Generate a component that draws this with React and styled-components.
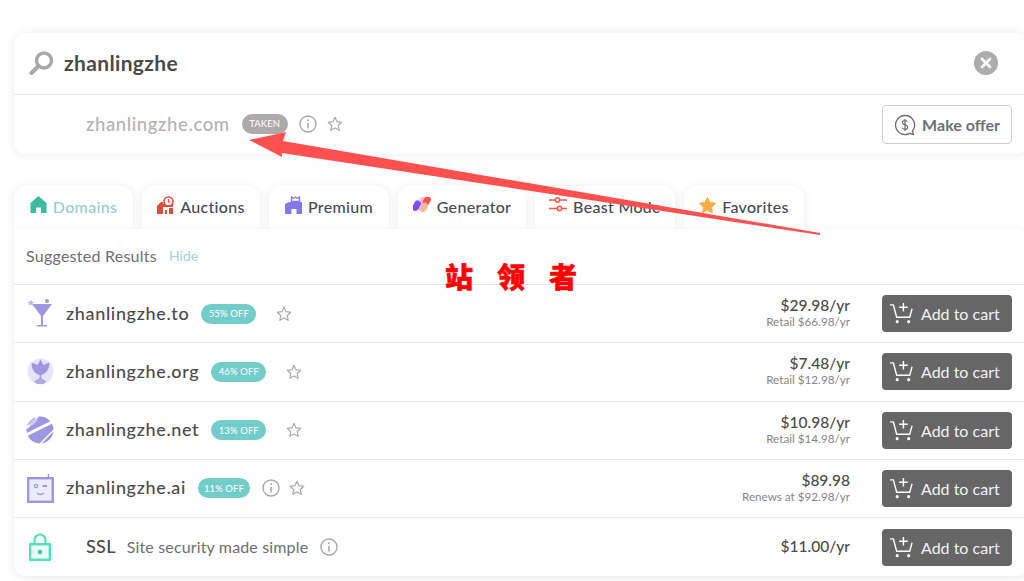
import styled, { createGlobalStyle } from "styled-components";

const GlobalStyle = createGlobalStyle`
  html, body {
    margin: 0;
    padding: 0;
    background: #fff;
    overflow: hidden;
  }
  body {
    font-family: "Lato", "Noto Sans CJK SC", sans-serif;
    color: #4a4a4a;
  }
`;

const InfoIcon = () => (
  <svg width="18" height="18" viewBox="0 0 18 18" fill="none">
    <circle cx="9" cy="9" r="8" stroke="#a9a9a9" strokeWidth="1.4" />
    <circle cx="9" cy="5.2" r="1" fill="#a9a9a9" />
    <path d="M9 8v5.6" stroke="#a9a9a9" strokeWidth="1.6" />
  </svg>
);

const StarIcon = () => (
  <svg width="16" height="16" viewBox="0 0 16 16" fill="none">
    <path
      d="M8 1.3l2 4.4 4.8.6-3.5 3.2.9 4.8L8 11.9l-4.2 2.4.9-4.8L1.2 6.3 6 5.7z"
      stroke="#a9a9a9"
      strokeWidth="1.2"
      strokeLinejoin="round"
    />
  </svg>
);

const CartIcon = () => (
  <svg width="23" height="23" viewBox="0 0 24 24" fill="none" stroke="#fff" strokeWidth="1.5">
    <path d="M0 3h3.500l3.500 13h13.500l2.500-9" strokeLinejoin="round" />
    <path d="M14 1v9M9.500 5.500h9" />
    <circle cx="7.500" cy="20.500" r="1.600" fill="#fff" stroke="none" />
    <circle cx="19.500" cy="20.500" r="1.600" fill="#fff" stroke="none" />
  </svg>
);

const HomeIcon = () => (
  <svg width="17" height="17" viewBox="0 0 17 17">
    <path d="M8.500 0L16.500 7v10h-5.500v-5.500H6V17H.5V7z" fill="#3dbb9f" />
  </svg>
);

const AuctionIcon = () => (
  <svg width="17" height="18" viewBox="0 0 17 18">
    <path d="M0 10l4-4 2 0v12H0zM8 14h2v4H8zM12 12h4v6h-4z" fill="#dd4b39" />
    <path d="M6 8h10v3H6z" fill="#dd4b39" />
    <circle cx="11.500" cy="5.500" r="4.500" fill="#fff" stroke="#dd4b39" strokeWidth="1.600" />
    <path d="M11.500 3v3h2.200" stroke="#dd4b39" strokeWidth="1.200" fill="none" />
  </svg>
);

const PremiumIcon = () => (
  <svg width="17" height="18" viewBox="0 0 17 18">
    <path d="M0 8l4-2h13v12h-5.500v-5h-5v5H0z" fill="#8378e8" />
    <path d="M6.500 5.500V1l2 1.500L10.500 1l2 1.500L14.500 1v4.500z" fill="#fff" stroke="#8378e8" strokeWidth="1.300" />
  </svg>
);

const GeneratorIcon = () => (
  <svg width="18" height="15" viewBox="0 0 18 15">
    <rect x="4.500" y="-1" width="6.500" height="14" rx="3.250" transform="rotate(30 7 7)" fill="#e9b7f3" />
    <rect x="0" y="3" width="6.500" height="11" rx="3.250" transform="rotate(30 3 9)" fill="#7c4dff" />
    <rect x="10.500" y="-1" width="6.500" height="10" rx="3.250" transform="rotate(30 14 4)" fill="#f2584a" />
    <rect x="7.500" y="5" width="6.500" height="10" rx="3.250" transform="rotate(30 10 10)" fill="#fbb59b" />
  </svg>
);

const BeastIcon = () => (
  <svg width="18" height="15" viewBox="0 0 18 15" fill="none" stroke="#f2584a" strokeWidth="1.500">
    <path d="M0 3h6M11 3h7M0 11.500h8M13 11.500h5" />
    <circle cx="8.500" cy="3" r="2.200" />
    <circle cx="10.500" cy="11.500" r="2.200" />
  </svg>
);

const FavoriteIcon = () => (
  <svg width="17" height="16" viewBox="0 0 17 16">
    <path
      d="M8.500.5l2.500 5 5.500.8-4 3.900.9 5.500-4.900-2.600-4.900 2.600.9-5.500-4-3.900 5.500-.8z"
      fill="#f6ab45"
      stroke="#f6ab45"
      strokeLinejoin="round"
    />
  </svg>
);

const CocktailLogo = () => (
  <svg width="26" height="29" viewBox="0 0 26 29">
    <path d="M5 5h20L16 17v9h4v1.500H10V26h4V17z" fill="#9c97e0" />
    <path d="M4 .5l1 2 2.500.5-2 1.500.5 2.500-2-1.500-2.500 1 .8-2.300L0 3l2.800-.2z" fill="#bcb8ec" />
    <circle cx="20" cy="2" r="2" fill="#9c97e0" />
  </svg>
);

const LotusLogo = () => (
  <svg width="27" height="27" viewBox="0 0 27 27">
    <circle cx="13.500" cy="13.500" r="13" fill="#e6e4f8" />
    <path d="M13.500 1.500l3 5.500 6-2.500c0 6-3 11-8 12.500h-2c-5-1.500-8-6.500-8-12.500l6 2.500z" fill="#9c97e0" />
    <path d="M12.500 17h2v3l5 3.500-3 2.500h-6l-3.500-2.500 5.500-3.500z" fill="#aeaae6" />
  </svg>
);

const NetLogo = () => (
  <svg width="28" height="28" viewBox="0 0 28 28">
    <circle cx="14" cy="14" r="13.500" fill="#9c97e0" />
    <path d="M1 12L12 0" stroke="#fff" strokeWidth="2" />
    <path d="M0 19L28 5" stroke="#fff" strokeWidth="3" />
    <path d="M4 9L10 3" stroke="#c9c6f0" strokeWidth="4" />
    <path d="M14 28L28 14" stroke="#fff" strokeWidth="1.500" />
  </svg>
);

const RobotLogo = () => (
  <svg width="27" height="29" viewBox="0 0 27 29" fill="none">
    <path d="M21.500 0v4" stroke="#9c97e0" strokeWidth="1.500" />
    <rect x="1.200" y="4.200" width="24.600" height="23.600" fill="#ecebfa" stroke="#9c97e0" strokeWidth="2.400" />
    <circle cx="9" cy="12" r="1.700" stroke="#9c97e0" strokeWidth="1.200" />
    <path d="M15.500 12h4.500" stroke="#9c97e0" strokeWidth="2" />
    <path d="M10 19q3.500 3 7 0" stroke="#9c97e0" strokeWidth="1.400" />
  </svg>
);

const LockLogo = () => (
  <svg width="22" height="28" viewBox="0 0 22 28" fill="none">
    <path d="M5.500 12V7a5.500 5.500 0 0 1 11 0v5" stroke="#4fe0b6" strokeWidth="2.200" />
    <rect x="1.200" y="11.200" width="19.600" height="15.600" stroke="#4fe0b6" strokeWidth="2.400" fill="#e9fbf5" />
    <circle cx="11" cy="19" r="2.300" fill="#3dcfa6" />
  </svg>
);

const Page = styled.div`
  position: relative;
  width: 1024px;
  height: 581px;
  padding: 33px 0 0 14px;
  box-sizing: border-box;
  overflow: hidden;
`;

const SearchCard = styled.section`
  width: 1014px;
  height: 121px;
  background: #fff;
  border-radius: 12px;
  box-shadow: 0 0 10px rgba(0, 0, 0, 0.09);
`;

const SearchRow = styled.div`
  height: 62px;
  box-sizing: border-box;
  display: flex;
  align-items: center;
  padding: 0 16px 1px 15px;
  border-bottom: 1px solid #e6e6e6;
`;

const SearchTerm = styled.span`
  margin: -2px 0 0 10px;
  font-size: 21px;
  font-weight: 700;
  letter-spacing: 0.35px;
  color: #4a4a4a;
  flex: 1;
`;

const ClearButton = styled.span`
  width: 24px;
  height: 24px;
  margin-right: 14px;
  border-radius: 50%;
  background: #acacac;
  display: flex;
  align-items: center;
  justify-content: center;
`;

const TakenRow = styled.div`
  height: 59px;
  box-sizing: border-box;
  display: flex;
  align-items: center;
  padding: 0 16px 2px 72px;
`;

const TakenName = styled.span`
  font-size: 18.500px;
  font-weight: 500;
  letter-spacing: 0.6px;
  color: #b5b1b1;
`;

const Badge = styled.span`
  display: inline-flex;
  align-items: center;
  justify-content: center;
  width: ${(p) => p.$width}px;
  height: 20px;
  margin-left: 12px;
  border-radius: 10px;
  background: ${(p) => p.$color};
  color: #fff;
  font-size: 9.500px;
  letter-spacing: 0.1px;
`;

const IconSlot = styled.span`
  display: inline-flex;
  margin-left: ${(p) => p.$gap}px;
`;

const Spacer = styled.span`
  flex: 1;
`;

const OfferButton = styled.span`
  width: 130px;
  height: 39px;
  margin-bottom: -2px;
  box-sizing: border-box;
  display: flex;
  align-items: center;
  justify-content: center;
  gap: 6px;
  border: 1px solid #cfcfcf;
  border-radius: 4px;
  font-size: 16px;
  font-weight: 700;
  color: #6b7075;
`;

const Tabs = styled.nav`
  display: flex;
  gap: 9px;
  margin-top: 32px;
  height: 43px;
`;

const Tab = styled.div`
  width: ${(p) => p.$width}px;
  box-sizing: border-box;
  display: flex;
  align-items: center;
  justify-content: center;
  gap: 6px;
  padding-bottom: 2px;
  border-radius: 12px 12px 0 0;
  background: #fff;
  box-shadow: 0 0 10px rgba(0, 0, 0, 0.08);
  font-size: 16px;
  font-weight: 500;
  letter-spacing: 0.3px;
  color: ${(p) => (p.$active ? "#8fcfcf" : "#464a52")};

  svg {
    margin-top: -4px;
  }
`;

const Panel = styled.section`
  position: relative;
  width: 1014px;
  height: 347px;
  background: #fff;
  border-radius: 0 12px 12px 12px;
  box-shadow: 0 2px 10px rgba(0, 0, 0, 0.08);
`;

const PanelHead = styled.div`
  height: 56px;
  box-sizing: border-box;
  display: flex;
  align-items: center;
  gap: 12px;
  padding: 0 12px 2px;
  border-bottom: 1px solid #e6e6e6;
`;

const HeadTitle = styled.span`
  font-size: 16px;
  letter-spacing: 0.25px;
  color: #6e6e6e;
`;

const HideLink = styled.span`
  font-size: 14px;
  color: #a3d0d4;
`;

const Row = styled.div`
  height: 58.250px;
  box-sizing: border-box;
  display: flex;
  align-items: center;
  padding: 0 16px 0 12px;
  border-bottom: ${(p) => (p.$last ? "none" : "1px solid #e9e9e9")};
`;

const LogoSlot = styled.span`
  width: 28px;
  margin-right: 12px;
  display: flex;
  justify-content: center;
`;

const Name = styled.span`
  margin-top: -2px;
  font-size: 18px;
  font-weight: 500;
  color: #4a4a4a;
  letter-spacing: 0.65px;
`;

const SslName = styled(Name)`
  margin-left: 20px;
  letter-spacing: 0.3px;
`;

const SslText = styled.span`
  margin: -2px 0 0 11px;
  font-size: 16px;
  letter-spacing: 0.15px;
  color: #6e6e6e;
`;

const Price = styled.div`
  margin-right: 32px;
  padding-bottom: 2px;
  text-align: right;
`;

const Amount = styled.div`
  font-size: 15.500px;
  font-weight: 500;
  line-height: 17px;
  color: #4a4a4a;
`;

const Retail = styled.div`
  font-size: 11.700px;
  line-height: 14px;
  color: #858585;
`;

const CartButton = styled.span`
  width: 130px;
  height: 37px;
  box-sizing: border-box;
  display: flex;
  align-items: center;
  gap: 8px;
  padding-left: 8px;
  border-radius: 4px;
  background: #666;
  color: #f2f2f2;
  font-size: 16px;
`;

const Arrow = styled.svg`
  position: absolute;
  top: 0;
  left: 0;
  pointer-events: none;
`;

const Stamp = styled.div`
  position: absolute;
  left: 445px;
  top: 258px;
  font-family: "Noto Sans CJK SC", sans-serif;
  font-size: 28px;
  font-weight: 900;
  line-height: 36px;
  letter-spacing: 24px;
  color: #f00;
  white-space: nowrap;
  -webkit-text-stroke: 0.6px #f00;
`;

const tabs = [
  { label: "Domains", width: 119, icon: <HomeIcon />, active: true },
  { label: "Auctions", width: 118, icon: <AuctionIcon /> },
  { label: "Premium", width: 120, icon: <PremiumIcon /> },
  { label: "Generator", width: 128, icon: <GeneratorIcon /> },
  { label: "Beast Mode", width: 140, icon: <BeastIcon /> },
  { label: "Favorites", width: 120, icon: <FavoriteIcon /> },
];

const rows = [
  { name: "zhanlingzhe.to", off: "55% OFF", logo: <CocktailLogo />, price: "$29.98/yr", note: "Retail $66.98/yr", starGap: 20 },
  { name: "zhanlingzhe.org", off: "46% OFF", logo: <LotusLogo />, price: "$7.48/yr", note: "Retail $12.98/yr", starGap: 20 },
  { name: "zhanlingzhe.net", off: "13% OFF", logo: <NetLogo />, price: "$10.98/yr", note: "Retail $14.98/yr", starGap: 20 },
  { name: "zhanlingzhe.ai", off: "11% OFF", width: 52, logo: <RobotLogo />, price: "$89.98", note: "Renews at $92.98/yr", info: true, starGap: 9 },
];

const App = () => {
  return (
    <Page>
      <GlobalStyle />
      <SearchCard>
        <SearchRow>
          <svg width="25" height="24" viewBox="0 0 25 24" fill="none">
            <circle cx="15" cy="9.500" r="7.500" stroke="#a8a8a8" strokeWidth="3.400" />
            <path d="M9.500 15L2.500 22" stroke="#a8a8a8" strokeWidth="4" strokeLinecap="round" />
          </svg>
          <SearchTerm>zhanlingzhe</SearchTerm>
          <ClearButton>
            <svg width="12" height="12" viewBox="0 0 12 12">
              <path d="M2 2l8 8M10 2l-8 8" stroke="#fff" strokeWidth="2.600" strokeLinecap="round" />
            </svg>
          </ClearButton>
        </SearchRow>
        <TakenRow>
          <TakenName>zhanlingzhe.com</TakenName>
          <Badge $color="#aeaaaa" $width={46}>TAKEN</Badge>
          <IconSlot $gap={11}>
            <InfoIcon />
          </IconSlot>
          <IconSlot $gap={10}>
            <StarIcon />
          </IconSlot>
          <Spacer />
          <OfferButton>
            <svg width="22" height="22" viewBox="0 0 22 22" fill="none">
              <path
                d="M11 1.500a9.500 9.500 0 1 0 4.500 17.900l4 1.100-1-3.600A9.500 9.500 0 0 0 11 1.500z"
                stroke="#6b6b6b"
                strokeWidth="1.300"
              />
              <path
                d="M13.500 7.800c-.5-1-1.500-1.300-2.500-1.300-1.500 0-2.600.8-2.600 2.100 0 3 5.300 1.600 5.300 4.600 0 1.300-1.200 2.100-2.700 2.100-1.200 0-2.300-.5-2.800-1.500M11 5v12"
                stroke="#6b6b6b"
                strokeWidth="1.200"
              />
            </svg>
            Make offer
          </OfferButton>
        </TakenRow>
      </SearchCard>

      <Tabs>
        {tabs.map((tab) => (
          <Tab key={tab.label} $width={tab.width} $active={tab.active}>
            {tab.icon}
            {tab.label}
          </Tab>
        ))}
      </Tabs>

      <Panel>
        <PanelHead>
          <HeadTitle>Suggested Results</HeadTitle>
          <HideLink>Hide</HideLink>
        </PanelHead>
        {rows.map((row) => (
          <Row key={row.name}>
            <LogoSlot>{row.logo}</LogoSlot>
            <Name>{row.name}</Name>
            <Badge $color="#72cdca" $width={row.width || 55}>{row.off}</Badge>
            {row.info && (
              <IconSlot $gap={12}>
                <InfoIcon />
              </IconSlot>
            )}
            <IconSlot $gap={row.starGap}>
              <StarIcon />
            </IconSlot>
            <Spacer />
            <Price>
              <Amount>{row.price}</Amount>
              <Retail>{row.note}</Retail>
            </Price>
            <CartButton>
              <CartIcon />
              Add to cart
            </CartButton>
          </Row>
        ))}
        <Row $last>
          <LogoSlot>
            <LockLogo />
          </LogoSlot>
          <SslName>SSL</SslName>
          <SslText>Site security made simple</SslText>
          <IconSlot $gap={12}>
            <InfoIcon />
          </IconSlot>
          <Spacer />
          <Price>
            <Amount>$11.00/yr</Amount>
          </Price>
          <CartButton>
            <CartIcon />
            Add to cart
          </CartButton>
        </Row>
      </Panel>

      <Arrow width="1024" height="581" viewBox="0 0 1024 581">
        <path d="M249 140L286 132 283 141 820 233 820 235 282 153 282 157z" fill="#ff5050" />
      </Arrow>
      <Stamp>站领者</Stamp>
    </Page>
  );
};

export default App;
